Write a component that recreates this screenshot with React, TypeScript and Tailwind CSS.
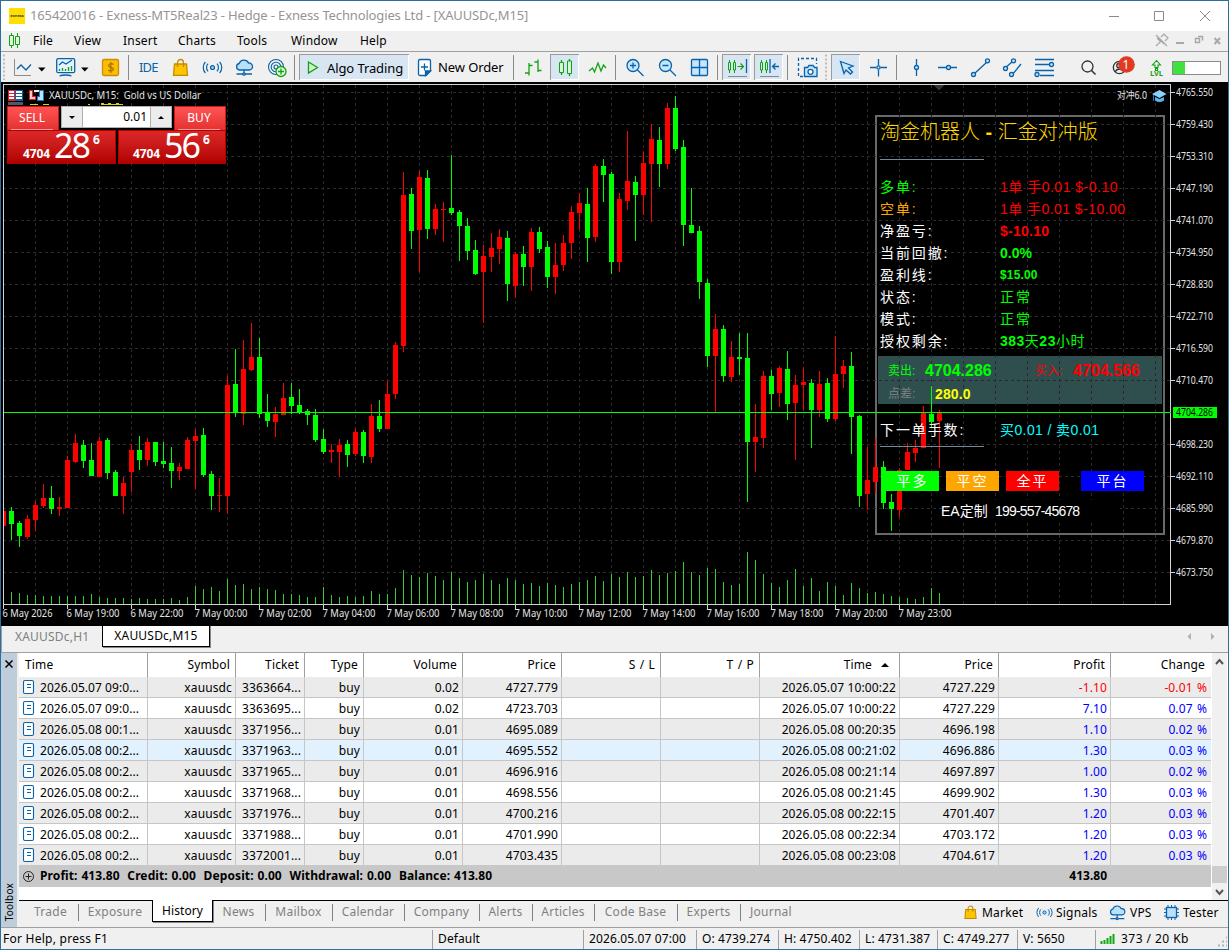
import type { ReactNode } from "react";

const UI = "font-['Noto_Sans','Noto_Sans_CJK_SC',sans-serif]";
const SONG = "font-['Liberation_Sans','Noto_Sans_CJK_SC',sans-serif]";

// r/g, high, body top, body bottom, low, top of the volume bar
type Candle = [string, number, number, number, number, number];

const candles: Candle[] = [
  ["r", 511, 511, 526, 526, 604], ["g", 507, 511, 524, 540, 592], ["g", 521, 523, 536, 547, 593],
  ["r", 515, 519, 537, 539, 595], ["r", 501, 505, 520, 531, 595], ["r", 484, 498, 506, 508, 596],
  ["g", 486, 498, 509, 514, 596], ["r", 497, 507, 509, 516, 596], ["r", 456, 460, 508, 508, 596],
  ["r", 434, 443, 462, 463, 596], ["g", 440, 445, 461, 468, 596], ["g", 443, 460, 476, 476, 594],
  ["r", 437, 441, 477, 477, 597], ["g", 438, 440, 473, 479, 598], ["g", 470, 472, 496, 496, 598],
  ["r", 477, 483, 496, 514, 598], ["r", 444, 450, 472, 492, 599], ["g", 436, 450, 460, 470, 598],
  ["r", 438, 442, 460, 466, 599], ["g", 442, 442, 462, 466, 599], ["g", 442, 461, 464, 468, 599],
  ["g", 447, 463, 471, 488, 598], ["r", 463, 467, 471, 480, 600], ["r", 437, 440, 469, 469, 597],
  ["r", 429, 436, 441, 489, 586], ["g", 428, 435, 475, 477, 589], ["g", 471, 474, 496, 510, 587],
  ["r", 478, 495, 496, 512, 591], ["r", 376, 385, 496, 514, 579], ["g", 349, 384, 413, 417, 585],
  ["r", 340, 369, 414, 425, 584], ["r", 323, 357, 370, 371, 589], ["g", 338, 357, 414, 418, 587],
  ["g", 394, 412, 421, 427, 589], ["r", 407, 414, 422, 437, 590], ["r", 383, 398, 415, 415, 594],
  ["g", 383, 397, 406, 414, 594], ["g", 389, 405, 413, 414, 595], ["g", 409, 411, 415, 425, 597],
  ["g", 409, 415, 440, 442, 597], ["g", 429, 439, 452, 454, 587], ["r", 444, 450, 452, 463, 595],
  ["r", 439, 445, 452, 477, 597], ["g", 440, 444, 455, 467, 596], ["r", 428, 432, 454, 456, 597],
  ["g", 430, 432, 456, 463, 596], ["r", 404, 416, 457, 463, 591], ["g", 400, 416, 429, 432, 594],
  ["r", 381, 394, 429, 429, 594], ["r", 342, 345, 394, 399, 588], ["r", 172, 195, 346, 352, 570],
  ["g", 188, 194, 231, 249, 575], ["r", 171, 177, 230, 272, 577], ["g", 170, 178, 229, 239, 573],
  ["r", 204, 209, 229, 235, 576], ["r", 202, 209, 210, 242, 580], ["g", 155, 208, 213, 215, 572],
  ["g", 210, 212, 226, 261, 578], ["g", 218, 226, 251, 260, 582], ["g", 240, 250, 274, 275, 580],
  ["r", 245, 256, 272, 323, 574], ["r", 233, 248, 257, 272, 580], ["r", 229, 237, 249, 264, 584],
  ["g", 231, 238, 284, 301, 578], ["r", 252, 254, 286, 298, 580], ["g", 246, 254, 267, 286, 584],
  ["r", 228, 232, 267, 291, 583], ["g", 227, 232, 249, 253, 586], ["g", 241, 247, 277, 288, 583],
  ["r", 243, 265, 277, 294, 585], ["r", 235, 243, 265, 271, 587], ["r", 206, 212, 243, 259, 584],
  ["r", 193, 203, 213, 230, 582], ["g", 188, 204, 238, 262, 580], ["r", 164, 166, 237, 242, 576],
  ["g", 159, 166, 175, 202, 581], ["g", 172, 174, 262, 274, 574], ["r", 193, 199, 262, 272, 577],
  ["r", 131, 181, 201, 210, 572], ["g", 176, 182, 195, 241, 577], ["r", 152, 163, 195, 215, 576],
  ["r", 124, 139, 164, 222, 570], ["g", 127, 140, 164, 187, 575], ["r", 103, 108, 164, 169, 573],
  ["g", 96, 108, 149, 151, 571], ["g", 140, 147, 225, 246, 562], ["g", 188, 225, 233, 233, 572],
  ["g", 226, 231, 282, 299, 575], ["g", 279, 283, 356, 367, 568], ["r", 314, 329, 356, 413, 569],
  ["g", 325, 329, 376, 382, 582], ["r", 341, 357, 377, 382, 585], ["g", 333, 357, 359, 375, 584],
  ["g", 333, 358, 442, 502, 552], ["r", 404, 437, 442, 472, 560], ["r", 371, 376, 438, 448, 574],
  ["g", 370, 376, 394, 410, 583], ["r", 366, 368, 393, 407, 587], ["g", 351, 369, 404, 420, 580],
  ["r", 375, 385, 403, 460, 569], ["r", 367, 382, 385, 410, 586], ["g", 379, 383, 410, 448, 578],
  ["r", 371, 384, 410, 417, 591], ["g", 378, 383, 419, 422, 582], ["r", 336, 374, 419, 421, 586],
  ["r", 360, 366, 374, 388, 595], ["g", 352, 366, 417, 454, 583], ["g", 415, 416, 496, 507, 588],
  ["r", 447, 480, 494, 510, 593], ["r", 438, 467, 482, 493, 592], ["g", 461, 467, 503, 509, 594],
  ["g", 494, 502, 509, 531, 596], ["r", 468, 470, 510, 517, 597], ["r", 443, 452, 470, 470, 598],
  ["r", 440, 448, 453, 462, 599], ["r", 406, 413, 448, 448, 597], ["g", 386, 414, 422, 428, 588],
  ["r", 410, 412, 421, 468, 593],
];

const prices = [
  "4765.550", "4759.430", "4753.310", "4747.190", "4741.070", "4734.950", "4728.830", "4722.710",
  "4716.590", "4710.470", "", "4698.230", "4692.110", "4685.990", "4679.870", "4673.750",
];

const times = [
  "6 May 2026", "6 May 19:00", "6 May 22:00", "7 May 00:00", "7 May 02:00", "7 May 04:00", "7 May 06:00",
  "7 May 08:00", "7 May 10:00", "7 May 12:00", "7 May 14:00", "7 May 16:00", "7 May 18:00", "7 May 20:00",
  "7 May 23:00",
];

const deals = [
  ["2026.05.07 09:0...", "3363664...", "0.02", "4727.779", "2026.05.07 10:00:22", "4727.229", "-1.10", "-0.01 %"],
  ["2026.05.07 09:0...", "3363695...", "0.02", "4723.703", "2026.05.07 10:00:22", "4727.229", "7.10", "0.07 %"],
  ["2026.05.08 00:1...", "3371956...", "0.01", "4695.089", "2026.05.08 00:20:35", "4696.198", "1.10", "0.02 %"],
  ["2026.05.08 00:2...", "3371963...", "0.01", "4695.552", "2026.05.08 00:21:02", "4696.886", "1.30", "0.03 %"],
  ["2026.05.08 00:2...", "3371965...", "0.01", "4696.916", "2026.05.08 00:21:14", "4697.897", "1.00", "0.02 %"],
  ["2026.05.08 00:2...", "3371968...", "0.01", "4698.556", "2026.05.08 00:21:45", "4699.902", "1.30", "0.03 %"],
  ["2026.05.08 00:2...", "3371976...", "0.01", "4700.216", "2026.05.08 00:22:15", "4701.407", "1.20", "0.03 %"],
  ["2026.05.08 00:2...", "3371988...", "0.01", "4701.990", "2026.05.08 00:22:34", "4703.172", "1.20", "0.03 %"],
  ["2026.05.08 00:2...", "3372001...", "0.01", "4703.435", "2026.05.08 00:23:08", "4704.617", "1.20", "0.03 %"],
];

const COLS = "grid grid-cols-[129px_88px_69px_59px_99px_99px_99px_99px_140px_99px_112px_100px]";

// Icons are drawn in window coordinates; x and w cut out the slot of the toolbar they fill.
function Icon({ x, w, y = 54, h = 26, children }: { x: number; w: number; y?: number; h?: number; children?: ReactNode }) {
  return (
    <svg className="block shrink-0" width={w} height={h} viewBox={`${x} ${y} ${w} ${h}`} fill="none" stroke="#0a62a8" strokeWidth="1.3">
      {children}
    </svg>
  );
}

function Separator({ x, w }: { x: number; w: number }) {
  return (
    <Icon x={x} w={w}>
      <path d={`M${x + Math.floor(w / 2) + 0.5} 55v25`} stroke="#8a8a8a" strokeWidth="1" />
    </Icon>
  );
}

function Pressed({ children, className = "" }: { children: ReactNode; className?: string }) {
  return (
    <div className={`h-[26px] shrink-0 overflow-hidden bg-[#d8e5f2] shadow-[inset_1px_1px_0_#9b9b9b,inset_-1px_-1px_0_#fff] ${className}`}>
      {children}
    </div>
  );
}

function Bag({ x, y, s = 1 }: { x: number; y: number; s?: number }) {
  return (
    <g transform={`translate(${x} ${y}) scale(${s})`} stroke="#c68a00">
      <path d="M1.5 5h12l1 11.300H.5z" fill="#fdc400" />
      <path d="M4.500 8V4a3 3.500 0 0 1 6 0v4" />
    </g>
  );
}

function Waves({ x, y, s = 1 }: { x: number; y: number; s?: number }) {
  return (
    <g transform={`translate(${x} ${y}) scale(${s})`} strokeWidth="1.1">
      <circle r="1.800" fill="#9fd4f5" />
      <path d="M-4 -3.500a5 5 0 0 0 0 7M4 -3.500a5 5 0 0 1 0 7M-6.500 -5a7.500 7.500 0 0 0 0 10M6.500 -5a7.500 7.500 0 0 1 0 10" />
    </g>
  );
}

function Cloud({ x, y, s = 1 }: { x: number; y: number; s?: number }) {
  return (
    <g transform={`translate(${x} ${y}) scale(${s})`}>
      <path d="M4 10.500a3.300 3.300 0 0 1-.3-6.500A5 5 0 0 1 13 3.500a3.500 3.500 0 0 1 1 7z" fill="#b9e0fb" />
      <path d="M8.500 10.500v4M1 14.500h15.500" />
      <circle cx="8.500" cy="14.500" r="1.200" fill="#b9e0fb" />
    </g>
  );
}

function TitleBar() {
  return (
    <div className="flex h-[30px] items-center bg-white pl-2">
      <div className="flex h-4 w-4 items-center justify-center bg-[#ffde00] text-[4px] font-bold leading-none text-[#333]">exness</div>
      <span className="ml-[5px] whitespace-pre text-[13px] tracking-[-0.140px] text-[#959595]">
        165420016 - Exness-MT5Real23 - Hedge - Exness Technologies Ltd - [XAUUSDc,M15]
      </span>
      <div className="ml-auto">
        <Icon x={1100} w={128} y={1} h={29}>
          <path d="M1109 15.500h10M1154.500 10.500h9v9h-9zM1200 10l10 10M1210 10l-10 10" stroke="#8a8a8a" strokeWidth="1" />
        </Icon>
      </div>
    </div>
  );
}

function MenuBar() {
  const menus = [
    ["File", "w-[41px]"], ["View", "w-[49px]"], ["Insert", "w-[55px]"], ["Charts", "w-[59px]"],
    ["Tools", "w-[54px]"], ["Window", "w-[69px]"], ["Help", "w-[60px]"],
  ];
  return (
    <div className="flex h-[21px] border-b border-[#a0a0a0] text-[12px] leading-[20px] tracking-[0.200px] text-black">
      <Icon x={1} w={32} y={31} h={20}>
        <path d="M11.500 33v15M17.500 33v15" stroke="#10a310" strokeWidth="1" />
        <path d="M9.500 35.500h4v10h-4zM15.500 36.500h4v8h-4z" fill="#e4f8e4" stroke="#10a310" strokeWidth="1" />
      </Icon>
      {menus.map(([label, width]) => (
        <span key={label} className={width}>{label}</span>
      ))}
      <div className="ml-auto">
        <Icon x={1150} w={78} y={31} h={20}>
          <g stroke="#a8a8a8" strokeWidth="1.200">
            <path d="M1156 35l11 11M1156 46l5-5M1159 39l5 5M1161 37l3-3 4 4-3 3M1157 38l4 4" />
            <path d="M1176 43h8" strokeWidth="2" />
            <path d="M1195.500 38.500h4v4h-4zM1198 36.500h4.500v4" strokeWidth="1.500" />
            <path d="M1214.500 38l5.500 6M1220 38l-5.500 6" strokeWidth="2" />
          </g>
        </Icon>
      </div>
    </div>
  );
}

function Toolbar() {
  return (
    <div className="flex h-[30px] pt-[2px] text-[13px]">
      <Icon x={1} w={8}>
        <path d="M4 54.500v26" stroke="#bcbcbc" strokeWidth="2" strokeDasharray="2 2" />
      </Icon>
      <Icon x={9} w={39}>
        <path d="M14.500 59v16.500H31" stroke="#8c8c8c" strokeWidth="1" />
        <path d="M17 69l4-4 5 5 5-5.500" />
        <path d="M38 67.500h7.500l-3.700 4z" fill="#000" stroke="none" />
      </Icon>
      <Icon x={48} w={46}>
        <rect x="56.700" y="58.700" width="18" height="14" rx="1.500" fill="#e4f3fd" />
        <path d="M59 65l3.500-3 3.500 2 6-4" />
        <path d="M59.500 71v-2M62.500 71v-3M65.500 71v-2M68.500 71v-4M71.500 71v-5" stroke="#10a310" />
        <path d="M59.500 76c3-1.300 9-1.300 12 0" />
        <path d="M81 67.500h7.500l-3.700 4z" fill="#000" stroke="none" />
      </Icon>
      <Icon x={94} w={30}>
        <rect x="102.500" y="59.500" width="16" height="16" rx="1.500" fill="#fdbe00" stroke="#c98c0c" />
        <path d="M113.500 64.500c-1-1.200-5-1.200-5 1s5 1.500 5 3.700-4.200 2-5.200.8M110.800 62v11" stroke="#a87000" strokeWidth="1.200" />
      </Icon>
      <Separator x={124} w={9} />
      <div className="w-[31px] pl-[6px] text-[13px] leading-[27px] tracking-[-0.8px] text-[#0a62a8]">IDE</div>
      <Icon x={164} w={32}><Bag x={173} y={59} /></Icon>
      <Icon x={196} w={33}><Waves x={212.500} y={67.500} s={1.100} /></Icon>
      <Icon x={229} w={32}><Cloud x={235.500} y={59.500} /></Icon>
      <Icon x={261} w={29}>
        <g strokeWidth="1.1">
          <circle cx="276" cy="67" r="7.500" /><circle cx="276" cy="67" r="4.800" /><circle cx="276" cy="67" r="2" />
        </g>
        <circle cx="281" cy="71.500" r="5" fill="#e6f9e6" stroke="#10a310" />
        <path d="M278 71.500h6M281 68.500v6" stroke="#10a310" />
      </Icon>
      <Separator x={290} w={9} />
      <Pressed className="flex w-[110px]">
        <Icon x={299} w={28}>
          <path d="M308.500 62l9 5.500-9 5.500z" fill="#d3f5d3" stroke="#10a310" />
        </Icon>
        <span className="leading-[28px] tracking-[-0.1px]">Algo Trading</span>
      </Pressed>
      <Icon x={409} w={29}>
        <path d="M420 59.500h9q1.500 0 1.500 1.500v10l-4.500 4.500H420q-1.500 0-1.500-1.500V61q0-1.500 1.500-1.500z" fill="#fff" />
        <path d="M425.500 75.500v-4.500h5z" fill="#0a62a8" />
        <path d="M421 67h7M424.500 63.500v7" />
      </Icon>
      <span className="w-[71px] whitespace-nowrap leading-[27px] tracking-[-0.1px]">New Order</span>
      <Separator x={509} w={9} />
      <Icon x={518} w={32}>
        <path d="M529 63v12.500M525 73h4M529 65.500h3.500M538 59.500v12.500M534.500 62h3.500M538 70.500h3.500" stroke="#10a310" />
      </Icon>
      <Pressed className="w-[29px]">
        <Icon x={550} w={29}>
          <path d="M561.500 60v15M569.500 59v17" stroke="#10a310" />
          <path d="M559.500 62.500h4v10h-4zM567.500 61h4v12.500h-4z" fill="#d8f7d8" stroke="#10a310" strokeWidth="1" />
        </Icon>
      </Pressed>
      <Icon x={579} w={32}>
        <path d="M589 71l3.500-3 2 4 3.500-9 3 8 2.500-6 2.500 3" stroke="#10a310" />
      </Icon>
      <Separator x={611} w={9} />
      <Icon x={620} w={64}>
        <circle cx="633" cy="65.500" r="6" fill="#c5e6fc" /><path d="M630 65.500h6M633 62.500v6M637.500 70l6 6" />
        <circle cx="665.500" cy="65.500" r="6" fill="#c5e6fc" /><path d="M662.500 65.500h6M670 70l6 6" />
      </Icon>
      <Icon x={684} w={29}>
        <rect x="691.500" y="59.500" width="16" height="16" rx="1" fill="#c5e6fc" /><path d="M699.500 59.500v16M691.500 67.500h16" />
      </Icon>
      <Separator x={713} w={9} />
      <Pressed className="w-[29px]">
        <Icon x={722} w={29}>
          <path d="M729.500 60v2.500M729.500 70v3M734.500 60v2.500M734.500 70v3M728.500 62.500h2v7.500h-2zM733.500 62.500h2v7.500h-2z" stroke="#10a310" strokeWidth="1" />
          <path d="M737.500 66.500h6M740.500 63.500l3 3-3 3" stroke="#10a310" strokeWidth="1.200" />
          <path d="M746.500 59v14" /><path d="M728 76.500h19" stroke="#888" strokeWidth="1" />
        </Icon>
      </Pressed>
      <Icon x={751} w={3} />
      <Pressed className="w-[29px]">
        <Icon x={754} w={29}>
          <path d="M761.500 60v2.500M761.500 70v3M766.500 60v2.500M766.500 70v3M760.500 62.500h2v7.500h-2zM765.500 62.500h2v7.500h-2z" stroke="#10a310" strokeWidth="1" />
          <path d="M770 59v14M772.500 66.500h6.500M775.500 63.500l-3 3 3 3" /><path d="M760 76.500h19" stroke="#888" strokeWidth="1" />
        </Icon>
      </Pressed>
      <Separator x={783} w={9} />
      <Icon x={792} w={39}>
        <path d="M803 76.500h-4.500v-18h18V64" strokeDasharray="3 2" />
        <path d="M804.500 67.500h3l1.500-2h4l1.500 2h2.500v9h-12.500z" fill="#c5e6fc" /><circle cx="810.500" cy="71.800" r="2.500" fill="#fff" />
        <path d="M826 54.500v26" stroke="#bcbcbc" strokeWidth="2" strokeDasharray="2 2" />
      </Icon>
      <Pressed className="w-[29px]">
        <Icon x={831} w={29}>
          <path d="M840.500 61.500l12.500 4.500-4.500 2 4 4-2 2-4.500-4-2 3.500z" fill="#c5e6fc" />
        </Icon>
      </Pressed>
      <Icon x={860} w={32}>
        <path d="M878.500 59v6.500M878.500 70v6.500M870 67.500h6.500M880.500 67.500h6.500" /><circle cx="878.500" cy="67.500" r="1.600" />
      </Icon>
      <Separator x={892} w={9} />
      <Icon x={901} w={164}>
        <path d="M916.500 59v17M938 67.500h19M974 74l13-12M1004 69l9-8M1012 75l9-11M1035 59.500h19M1035 64.500h15M1035 70.500h19M1040 75.500h14" />
        <g fill="#c5e6fc">
          <circle cx="916.500" cy="67.500" r="2" /><circle cx="948.500" cy="67.500" r="2" />
          <circle cx="973.500" cy="74.500" r="2" /><circle cx="987.500" cy="60.800" r="2" />
          <circle cx="1005.500" cy="68.500" r="2" /><circle cx="1013.500" cy="60.800" r="2" /><circle cx="1011.500" cy="74.500" r="2" />
          <circle cx="1051.500" cy="64.500" r="2" /><circle cx="1037" cy="74.500" r="2" />
        </g>
      </Icon>
      <Icon x={1065} w={80}>
        <circle cx="1087.500" cy="66.500" r="5.500" stroke="#333" /><path d="M1091.500 70.500l4 4" stroke="#333" strokeWidth="1.600" />
        <circle cx="1119.500" cy="67.500" r="6.200" stroke="#333" /><path d="M1115 72c2-4 7-4 9 0" stroke="#333" />
        <circle cx="1119" cy="65.500" r="2.200" stroke="#333" />
        <circle cx="1126.500" cy="64.500" r="8.300" fill="#df3a22" stroke="none" />
        <text x="1126" y="69" textAnchor="middle" fontSize="12" fill="#fff" stroke="none">1</text>
      </Icon>
      <Icon x={1145} w={83}>
        <path d="M1155.500 70.500v-2h2v2zM1155 67.500v-2.500h-2.500l4-4.500 4 4.500h-2.500v2.500z" stroke="#10a310" strokeWidth="1.1" />
        <text x="1150" y="75.500" fontSize="7.500" fontWeight="bold" fill="#10a310" stroke="none" textLength="13" lengthAdjust="spacingAndGlyphs">LVL</text>
        <rect x="1172.500" y="61.500" width="48" height="13" fill="#fff" stroke="#8a8a8a" strokeWidth="1" />
        <rect x="1173" y="62" width="12" height="12" fill="#3fe03f" stroke="none" />
      </Icon>
    </div>
  );
}

function Chart() {
  const columns = Array.from({ length: 36 }, (_, i) => 35.5 + i * 32);
  return (
    <svg className="block" width="1227" height="544" viewBox="1 82 1227 544" shapeRendering="crispEdges">
      <rect x="1" y="82" width="1227" height="544" fill="#000" />
      <rect x="876" y="116" width="288" height="418" fill="none" stroke="#696969" strokeWidth="2" />
      <rect x="878" y="356" width="284" height="48" fill="#2f4f4f" />
      <g stroke="#2a2a2a" strokeDasharray="3 3">
        {columns.map((x) => <path key={x} d={`M${x} 85V604`} />)}
        {prices.map((_, i) => <path key={i} d={`M3 ${92.5 + i * 32}H1170`} />)}
      </g>
      <path d="M933 85h12l-6 5z" fill="#333" />
      <rect x="948" y="500" width="172" height="20" fill="#000" />

      {candles.map(([color, high, top, bottom, low, volume], i) => {
        const x = 3 + i * 8;
        const fill = color === "r" ? "#f00" : "#0f0";
        return (
          <g key={i}>
            <rect x={x} y={volume} width="1" height={604 - volume} fill="#32cd32" />
            <rect x={x} y={high} width="1" height={low - high} fill={fill} />
            <rect x={x - 2} y={top} width="5" height={bottom - top} fill={fill} />
          </g>
        );
      })}

      <rect x="1" y="85" width="2" height="520" fill="#000" />
      <path d="M3.500 605V84.500H1170.500V604.500H3.500" fill="none" stroke="#d3d3d3" />
      <path d="M4 412.500H1171" stroke="#0f0" />

      <g fontSize="11" fill="#e4e4e4">
        {prices.map((p, i) => p && (
          <g key={p}>
            <path d={`M1171 ${92.5 + i * 32}h4`} stroke="#d3d3d3" />
            <text x="1176" y={96 + i * 32} textLength="37" lengthAdjust="spacingAndGlyphs">{p}</text>
          </g>
        ))}
        <rect x="1173" y="407" width="44" height="11" fill="#0f0" />
        <text x="1176" y="416" textLength="37" lengthAdjust="spacingAndGlyphs" fill="#000">4704.286</text>
        {times.map((t, i) => (
          <g key={t}>
            <path d={`M${3.5 + i * 64} 605v4`} stroke="#d3d3d3" />
            <text x={2.5 + i * 64} y="617" fontSize="10.500" textLength={i === 0 ? 50 : 53} lengthAdjust="spacingAndGlyphs">{t}</text>
          </g>
        ))}
        <text x="49" y="99" fontSize="10.500" textLength="152" lengthAdjust="spacingAndGlyphs" xmlSpace="preserve">XAUUSDc, M15:  Gold vs US Dollar</text>
        <text x="1117" y="99" fontSize="10" textLength="30" lengthAdjust="spacingAndGlyphs">对冲6.0</text>
      </g>

      <g>
        <path d="M8 90h15v11H8z" fill="#fff" />
        <path d="M8 90h7v11H8z" fill="#e02020" />
        <path d="M15 90h8v11h-8z" fill="#0a62a8" />
        <path d="M9 91h5v2H9zM9 94h5v2H9zM9 97h5v2H9zM16 91h6v2h-6zM16 94h6v2h-6zM16 97h6v2h-6z" fill="#fff" />
        <path d="M8 102h15v3H8z" fill="#556" />
        <path d="M29 90h4v6h3v4h-7z" fill="#e02020" />
        <path d="M30 91h2v6h3v2h-5z" fill="#ffd0d0" />
        <path d="M34 90h5v2h-5z" fill="#eee" />
        <path d="M39 90h5v11h-7v-5h2z" fill="#1b78c0" />
        <path d="M40 91h3v9h-5v-3h2z" fill="#bfe3fb" />
        <path d="M30 104h8v1h-8zM43 104h6v1h-6zM88 104h2v1h-2zM101 103h3v1h4v-1h3v1h5v-1h3v1h4v1h-22z" fill="#d8d800" />
      </g>
      <g shapeRendering="auto">
        <path d="M1152 94l7.500-4 7 4-7 4z" fill="#8fd0fa" />
        <path d="M1155 97v3.500c3 2 6 2 9 0V97l-4.500 2z" fill="#5db2ea" />
        <path d="M1153.500 95v6" stroke="#1b78c0" />
      </g>
    </svg>
  );
}

function QuoteBox({ side, big }: { side: string; big: string }) {
  return (
    <div className={`flex h-[34px] border border-[#b60000] bg-gradient-to-b from-[#dc2727] to-[#b20000] text-white ${side === "sell" ? "w-[109px] pl-[15px]" : "w-[108px] pl-[14px]"}`}>
      <span className="w-[31px] pt-[15px] text-[12px] font-bold leading-[16px] tracking-[-0.1px]">4704</span>
      <span className="w-[39px] text-[34px] leading-[29px] tracking-[-2px]">{big}</span>
      <span className="pt-[2px] text-[12px] font-bold leading-[14px]">6</span>
    </div>
  );
}

function OneClick() {
  const head = "h-6 w-[52px] border border-[#c81818] border-b-0 bg-gradient-to-b from-[#ff5353] to-[#e43030] pr-[2px] text-center text-[12px] leading-[22px] text-white";
  return (
    <div className="absolute left-[6px] top-[24px] w-[219px] bg-black">
      <div className="flex justify-between">
        <div className={head}>SELL<div className="mx-[3px] h-px bg-[#ff9a9a]" /></div>
        <div className="flex h-[22px] w-[111px] border border-[#b0b0b0] bg-white">
          <div className="flex w-[21px] items-center justify-center border-r border-[#b0b0b0] bg-[#ececec]">
            <span className="h-0 w-0 border-x-[3px] border-t-[3px] border-x-transparent border-t-black" />
          </div>
          <span className="flex-1 pr-[3px] text-right text-[12px] leading-[20px]">0.01</span>
          <div className="flex w-[21px] items-center justify-center border-l border-[#b0b0b0] bg-[#ececec]">
            <span className="h-0 w-0 border-x-[3px] border-b-[3px] border-x-transparent border-b-black" />
          </div>
        </div>
        <div className={head}>BUY<div className="mx-[3px] h-px bg-[#ff9a9a]" /></div>
      </div>
      <div className="flex justify-between">
        <QuoteBox side="sell" big="28" />
        <QuoteBox side="buy" big="56" />
      </div>
    </div>
  );
}

function PanelRow({ label, labelClass = "text-white", children }: { label: string; labelClass?: string; children: ReactNode }) {
  return (
    <div className="grid h-[22px] grid-cols-[120px_1fr] items-center whitespace-nowrap">
      <span className={`text-[14px] tracking-[1.900px] ${labelClass}`}>{label}</span>
      {children}
    </div>
  );
}

function RobotPanel() {
  const ok = "text-[14px] tracking-[2px] text-[#0f0]";
  const button = "flex h-5 items-center justify-center text-[14px] tracking-[2px] text-white";
  return (
    <div className={`absolute left-[874px] top-[33px] h-[420px] w-[290px] pl-[5px] ${SONG}`}>
      <div className="pt-[3px] text-[20px] leading-[28px] text-[#ffd700]">
        <span className="font-light">淘金机器人</span> <span className="font-bold">-</span>{" "}
        <span className="font-light">汇金对冲版</span>
      </div>
      <div className="mt-[13px] h-px w-[104px] bg-[#778899]" />
      <div className="pt-[16px]">
        <PanelRow label="多单:" labelClass="text-[#0f0]">
          <span className="text-[14px] tracking-[0.500px] text-[#f00]">1单 手0.01 $-0.10</span>
        </PanelRow>
        <PanelRow label="空单:" labelClass="text-[#ffa500]">
          <span className="text-[14px] tracking-[0.450px] text-[#f00]">1单 手0.01 $-10.00</span>
        </PanelRow>
        <PanelRow label="净盈亏:"><b className="text-[14px] tracking-[0.250px] text-[#f00]">$-10.10</b></PanelRow>
        <PanelRow label="当前回撤:"><b className="text-[14px] text-[#0f0]">0.0%</b></PanelRow>
        <PanelRow label="盈利线:"><b className="text-[12px] tracking-[0.150px] text-[#0f0]">$15.00</b></PanelRow>
        <PanelRow label="状态:"><span className={ok}>正常</span></PanelRow>
        <PanelRow label="模式:"><span className={ok}>正常</span></PanelRow>
        <PanelRow label="授权剩余:">
          <span className="text-[14px] tracking-[0.500px] text-[#0f0]"><b>383</b>天<b>23</b>小时</span>
        </PanelRow>
      </div>
      <div className="h-[52px] pl-[8px] pt-[7px]">
        <div className="flex h-[23px] items-center">
          <span className="w-[37px] text-[12px] text-[#0f0]">卖出:</span>
          <b className="w-[110px] text-[16px] text-[#0f0]">4704.286</b>
          <span className="w-[38px] text-[12px] text-[#f00]">买入:</span>
          <b className="text-[16px] text-[#f00]">4704.566</b>
        </div>
        <div className="flex h-[24px] items-center">
          <span className="w-[47px] text-[12px] text-[#808080]">点差:</span>
          <b className="text-[14px] tracking-[0.150px] text-[#ff0]">280.0</b>
        </div>
      </div>
      <div className="pt-[15px]">
        <PanelRow label="下一单手数:">
          <span className="text-[14px] tracking-[0.400px] text-[#0ff]">买0.01 / 卖0.01</span>
        </PanelRow>
      </div>
      <div className="mt-[5px] h-px w-[104px] bg-[#778899]" />
      <div className="flex pl-[6px] pt-[24px]">
        <div className={`w-[53px] bg-[#0f0] ${button}`}>平多</div>
        <div className={`ml-[7px] w-[53px] bg-[#ffa500] ${button}`}>平空</div>
        <div className={`ml-[7px] w-[53px] bg-[#f00] ${button}`}>全平</div>
        <div className={`ml-[22px] w-[63px] bg-[#00f] ${button}`}>平台</div>
      </div>
      <div className="flex items-center pl-[61px] pt-[10px] text-white">
        <span className="w-[54px] text-[14px] leading-[20px]">EA定制</span>
        <span className="text-[14px] leading-[20px] tracking-[-0.820px]">199-557-45678</span>
      </div>
    </div>
  );
}

function History() {
  const head = "border-r border-[#a0a0a0] pr-[5px] text-right [word-spacing:1px]";
  const cell = "border-r border-[#c6c6c6] pr-[3px] text-right";
  const heads = ["Symbol", "Ticket", "Type", "Volume", "Price", "S / L", "T / P"];
  return (
    <div className="w-[1192px] whitespace-pre bg-white text-[12px]">
      <div className={`h-6 leading-[24px] tracking-[0.150px] ${COLS}`}>
        <span className="border-r border-[#a0a0a0] pl-[6px]">Time</span>
        {heads.map((h) => <span key={h} className={head}>{h}</span>)}
        <span className="flex items-center justify-end border-r border-[#a0a0a0] pr-[10px]">
          Time
          <i className="ml-[9px] border-x-[4px] border-b-[4px] border-x-transparent border-b-black" />
        </span>
        <span className={head}>Price</span>
        <span className={head}>Profit</span>
        <span className="pr-[6px] text-right">Change</span>
      </div>
      {deals.map(([open, ticket, volume, price, close, closePrice, profit, change], i) => {
        const bg = i === 3 ? "bg-[#e1f1fe]" : i % 2 ? "bg-white" : "bg-[#ebebeb]";
        const tone = profit.startsWith("-") ? "text-[#f00]" : "text-[#00f]";
        return (
          <div key={ticket} className={`leading-[21px] tracking-[0.120px] ${COLS} ${bg} ${i === 8 ? "h-5" : "h-[21px] border-b border-[#c6c6c6]"}`}>
            <span className="flex border-r border-[#c6c6c6] tracking-[0.060px]">
              <Icon x={0} w={21} y={0} h={20}>
                <rect x="4.500" y="3.500" width="10" height="13" rx="1.500" fill="#fff" strokeWidth="1.1" />
                <path d="M8 7.500h4M8 10.500h4" strokeWidth="1" />
              </Icon>
              {open}
            </span>
            <span className={cell}>xauusdc</span>
            <span className={cell}>{ticket}</span>
            <span className={cell}>buy</span>
            <span className={cell}>{volume}</span>
            <span className={cell}>{price}</span>
            <span className={cell} />
            <span className={cell} />
            <span className={cell}>{close}</span>
            <span className={cell}>{closePrice}</span>
            <span className={`${cell} ${tone}`}>{profit}</span>
            <span className={`pr-1 text-right [word-spacing:1px] ${tone}`}>{change}</span>
          </div>
        );
      })}
      <div className="flex h-[22px] bg-[#c8c8c8] font-bold leading-[22px]">
        <Icon x={0} w={21} y={0} h={22}>
          <circle cx="9.500" cy="11.500" r="5" stroke="#222" strokeWidth="1" />
          <path d="M6.500 11.500h6M9.500 8.500v6" stroke="#222" strokeWidth="1" />
        </Icon>
        <span className="tracking-[0.100px] [word-spacing:0.600px]">Profit: 413.80  Credit: 0.00  Deposit: 0.00  Withdrawal: 0.00  Balance: 413.80</span>
        <span className="ml-auto pr-[104px]">413.80</span>
      </div>
      <div className="h-[13px]" />
    </div>
  );
}

const tabs = [
  ["Trade", "w-[55px]"], ["Exposure", "w-[73px]"], ["History", "w-[61px]"], ["News", "w-[53px]"],
  ["Mailbox", "w-[67px]"], ["Calendar", "w-[72px]"], ["Company", "w-[75px]"], ["Alerts", "w-[53px]"],
  ["Articles", "w-[62px]"], ["Code Base", "w-[83px]"], ["Experts", "w-[63px]"], ["Journal", "w-[61px]"],
];

function ToolboxTabs() {
  return (
    <div className="flex h-[27px] border-t border-black pl-[5px] text-[12px] tracking-[0.100px] text-[#808080]">
      {tabs.map(([label, width], i) =>
        label === "History" ? (
          <div key={label} className={`-mt-px h-[22px] border border-t-0 border-black bg-white text-center leading-[21px] text-black shadow-[1px_1px_0_#888] ${width}`}>
            {label}
          </div>
        ) : (
          <div key={label} className={`flex pt-[2px] leading-[17px] ${width}`}>
            <span className="flex-1 pr-px text-center tracking-[0.250px]">{label}</span>
            {i !== 1 && i !== 11 && <i className="mt-px h-[17px] w-px bg-[#808080]" />}
          </div>
        ),
      )}
      <div className="ml-auto flex pt-[2px] leading-[20px] tracking-[0.200px] text-black">
        <Icon x={960} w={22} y={903} h={20}><Bag x={964.500} y={905.500} s={0.800} /></Icon>
        <span className="w-[50px]">Market</span>
        <Icon x={1032} w={24} y={903} h={20}><Waves x={1044.500} y={912.500} s={0.900} /></Icon>
        <span className="w-[49px]">Signals</span>
        <Icon x={1105} w={25} y={903} h={20}><Cloud x={1109.500} y={905.500} s={0.900} /></Icon>
        <span className="w-[29px]">VPS</span>
        <Icon x={1159} w={24} y={903} h={20}>
          <path d="M1168 905v15M1171.500 905v15M1175 905v15M1164 909h15M1164 912.500h15M1164 916h15" strokeWidth="1" />
          <rect x="1166.500" y="907.500" width="10" height="10" fill="#b9e0fb" />
        </Icon>
        <span className="w-[45px]">Tester</span>
      </div>
    </div>
  );
}

function StatusBar() {
  const cells = [
    ["Default", "w-[151px]"], ["2026.05.07 07:00", "w-[113px]"], ["O: 4739.274", "w-[82px]"], ["H: 4750.402", "w-[81px]"],
    ["L: 4731.387", "w-[78px]"], ["C: 4749.277", "w-[80px]"], ["V: 5650", "w-[78px]"],
  ];
  return (
    <div className="flex h-[22px] whitespace-nowrap border-t border-[#a0a0a0] pt-[2px] text-[12px] leading-[18px] tracking-[0.120px]">
      <span className="w-[432px] border-r border-[#a0a0a0] pl-[2px] tracking-[0.250px]">For Help, press F1</span>
      {cells.map(([text, width]) => (
        <span key={text} className={`border-r border-[#a0a0a0] pl-[5px] ${width}`}>{text}</span>
      ))}
      <Icon x={1096} w={25} y={930} h={18}>
        <path d="M1101.500 944v-3M1104.500 944v-4M1107.500 944v-6M1110.500 944v-8M1113.500 944v-10" stroke="#12a812" strokeWidth="2" />
      </Icon>
      <span className="tracking-[0.450px]">373 / 20 Kb</span>
      <div className="ml-auto">
        <Icon x={1208} w={20} y={930} h={18}>
          <path d="M1218 945.500h9M1222 941.500h5M1226 937.500h1" stroke="#b5b5b5" strokeWidth="2" strokeDasharray="2 2" />
        </Icon>
      </div>
    </div>
  );
}

export default function App() {
  return (
    <div className={`h-[950px] w-[1229px] overflow-hidden border border-[#2a6f9e] bg-[#f0f0f0] text-black ${UI}`}>
      <TitleBar />
      <MenuBar />
      <Toolbar />

      <div className="relative h-[544px]">
        <Chart />
        <OneClick />
        <RobotPanel />
      </div>

      <div className="flex h-[26px] text-[12px] tracking-[0.200px]">
        <span className="w-[101px] border-l border-[#a0a0a0] pl-[13px] leading-[21px] text-[#808080]">XAUUSDc,H1</span>
        <span className="-mt-px h-[22px] w-[108px] border border-t-0 border-black bg-white text-center leading-[21px] shadow-[1px_1px_0_#888]">
          XAUUSDc,M15
        </span>
        <div className="ml-auto">
          <Icon x={1180} w={48} y={626} h={26}>
            <path d="M1191 633v7l-3.500-3.500zM1211 633v7l3.500-3.500z" fill="#b0b0b0" stroke="none" />
          </Icon>
        </div>
      </div>

      <div className="flex h-[275px] border-t border-[#a0a0a0]">
        <div className="flex w-4 flex-col items-center justify-between bg-[#bfcddb] pb-[6px] pt-[7px]">
          <svg width="8" height="8" viewBox="0 0 8 8" stroke="#000" strokeWidth="1.500"><path d="M.5.500l7 7M7.500.500l-7 7" /></svg>
          <span className="rotate-180 text-[10px] leading-[14px] tracking-[0.200px] [writing-mode:vertical-rl]">Toolbox</span>
        </div>
        <div className="ml-[2px] w-[1209px]">
          <div className="flex h-[247px] bg-white">
            <History />
            <div className="ml-px flex w-[15px] flex-col bg-[#f0f0f0]">
              <Icon x={0} w={15} y={0} h={20}><path d="M4 11l3.500-4 3.500 4" stroke="#555" strokeWidth="2" /></Icon>
              <div className="mt-auto h-[17px] bg-[#cdcdcd]" />
              <Icon x={0} w={15} y={0} h={17}><path d="M4 7l3.500 4 3.500-4" stroke="#555" strokeWidth="2" /></Icon>
            </div>
          </div>
          <ToolboxTabs />
        </div>
      </div>
      <StatusBar />
    </div>
  );
}
